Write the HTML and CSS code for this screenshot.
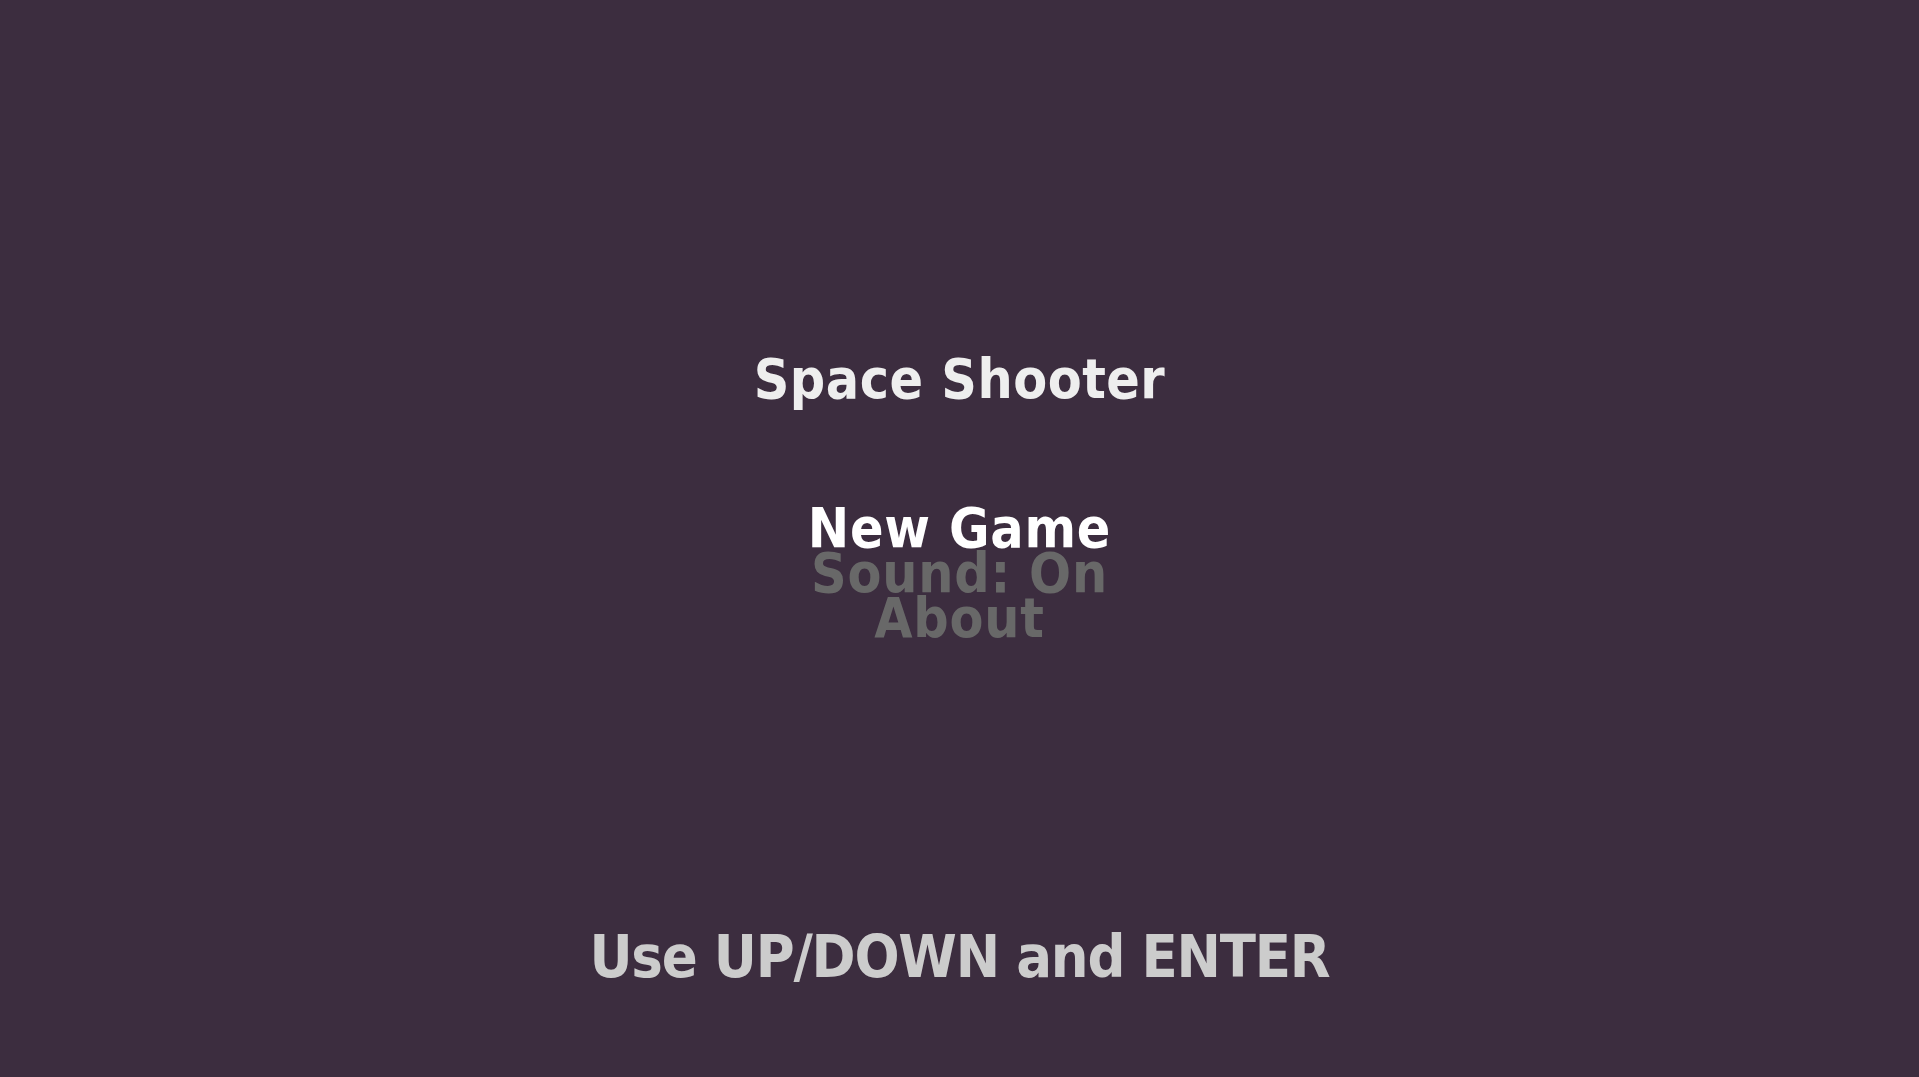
FILE: index.html
```html
<!DOCTYPE html>
<html>
<head>
<meta charset="utf-8">
<link rel="stylesheet" href="styles.css">
</head>
<body>
<main class="screen">
  <h1 class="title">Space Shooter</h1>
  <ul class="menu">
    <li class="item selected">New Game</li>
    <li class="item">Sound: On</li>
    <li class="item">About</li>
  </ul>
  <p class="hint">Use UP/DOWN and ENTER</p>
</main>
</body>
</html>
```
FILE: styles.css
```css
html, body {
  margin: 0;
  padding: 0;
  height: 100%;
  background: #3c2d3f;
}
.screen {
  height: 100vh;
  display: flex;
  flex-direction: column;
  align-items: center;
  font-family: "DejaVu Sans", sans-serif;
  font-weight: bold;
  font-stretch: condensed;
}
.title {
  margin: 352px 0 0 0;
  font-size: 55px;
  line-height: 55px;
  letter-spacing: 0.5px;
  color: #eeeeee;
  font-weight: bold;
}
.menu {
  list-style: none;
  margin: 99px 0 0 0;
  padding: 0;
  display: flex;
  flex-direction: column;
  align-items: center;
}
.item {
  font-size: 55px;
  line-height: 45px;
  letter-spacing: 0.8px;
  color: #686868;
}
.item.selected {
  color: #ffffff;
}
.hint {
  margin: 286px 0 0 0;
  font-size: 59px;
  line-height: 59px;
  letter-spacing: -1.2px;
  color: #cccccc;
}
```
